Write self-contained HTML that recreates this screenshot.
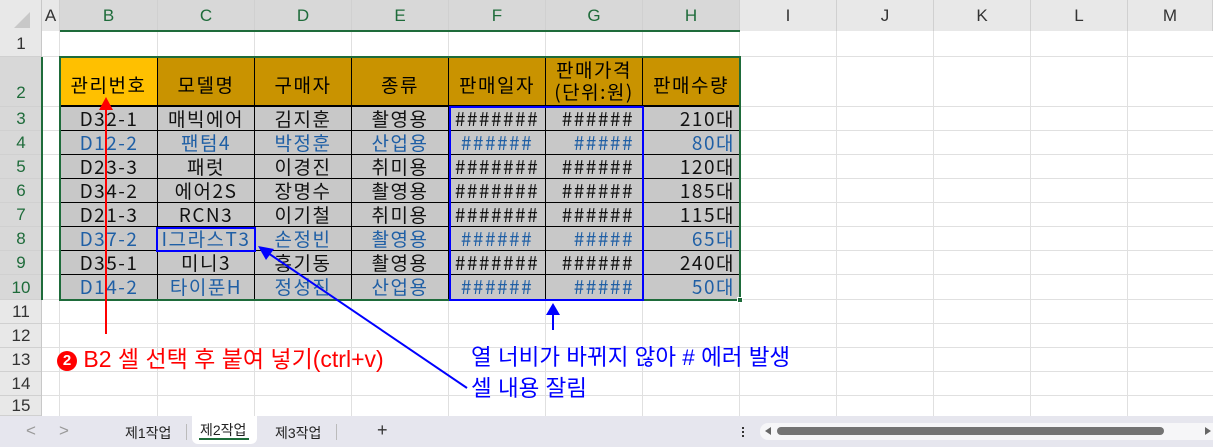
<!DOCTYPE html>
<html><head><meta charset="utf-8"><style>
*{margin:0;padding:0;box-sizing:border-box}
body{width:1213px;height:447px;overflow:hidden;background:#fff;position:relative;font-family:"Liberation Sans","Noto Sans CJK KR",sans-serif}
.a{position:absolute}
.ch{position:absolute;top:0;height:31px;background:#e8e8e8;border-right:1px solid #d0d0d0;color:#333;font-size:17px;text-align:center;line-height:31px}
.rh{position:absolute;left:0;width:42px;background:#e8e8e8;border-bottom:1px solid #d0d0d0;color:#333;font-size:17px;text-align:center}
.c{position:absolute;border-right:1px solid #000;border-bottom:1px solid #000;font-family:"Noto Sans CJK KR",sans-serif;font-weight:400;font-size:19px;text-align:center;overflow:hidden;white-space:nowrap;letter-spacing:1.5px}
.gl{position:absolute;background:#e0e0e0}
</style></head><body>
<div id="g"></div>
<script>
var cols=[42,60,158,255,352,449,546,643,740,837,934,1031,1128,1213];
var names=["A","B","C","D","E","F","G","H","I","J","K","L","M"];
var rows=[31,57,107,131,155,179,203,227,251,275,300,324,348,372,396,416];
var h="";
for(var i=1;i<cols.length-1;i++)h+='<div class="gl" style="left:'+(cols[i]-1)+'px;top:31px;width:1px;height:385px"></div>';
for(var j=1;j<rows.length-1;j++)h+='<div class="gl" style="left:42px;top:'+(rows[j]-1)+'px;width:1171px;height:1px"></div>';
for(var i=0;i<names.length;i++){var sel=i>=1&&i<=7;h+='<div class="ch" style="left:'+cols[i]+'px;width:'+(cols[i+1]-cols[i])+'px;'+(sel?'color:#1e6b3a;background:#d8d8d8':'')+'">'+names[i]+'</div>';}
h+='<div class="a" style="left:0;top:0;width:42px;height:31px;background:#e8e8e8;border-right:1px solid #d0d0d0"></div>';
h+='<div class="a" style="left:14px;top:12px;width:0;height:0;border-left:16px solid transparent;border-bottom:16px solid #c8c8c8"></div>';
for(var j=0;j<rows.length-1;j++){var sel=j>=1&&j<=9;var hh=rows[j+1]-rows[j];h+='<div class="rh" style="top:'+rows[j]+'px;height:'+hh+'px;line-height:'+(j==1?hh*1.45:hh)+'px;'+(sel?'color:#1e6b3a;background:#d8d8d8':'')+'">'+(j+1)+'</div>';}
h+='<div class="a" style="left:41px;top:0;width:1px;height:416px;background:#c8c8c8"></div>';
h+='<div class="a" style="left:60px;top:30px;width:680px;height:2px;background:#1e6b3a"></div>';
h+='<div class="a" style="left:41px;top:57px;width:2px;height:243px;background:#1e6b3a"></div>';
var hd=["관리번호","모델명","구매자","종류","판매일자","판매가격<br>(단위:원)","판매수량"];
var data=[["D32-1","매빅에어","김지훈","촬영용","#######","######","210대",0],
["D12-2","팬텀4","박정훈","산업용","######","#####","80대",1],
["D23-3","패럿","이경진","취미용","#######","######","120대",0],
["D34-2","에어2S","장명수","촬영용","#######","######","185대",0],
["D21-3","RCN3","이기철","취미용","#######","######","115대",0],
["D37-2","I그라스T3","손정빈","촬영용","######","#####","65대",1],
["D35-1","미니3","홍기동","촬영용","#######","######","240대",0],
["D14-2","타이푼H","정성진","산업용","######","#####","50대",1]];
for(var i=0;i<7;i++){h+='<div class="c" style="left:'+cols[i+1]+'px;top:57px;width:'+(cols[i+2]-cols[i+1])+'px;height:50px;border-bottom:2px solid #000;background:'+(i==0?'#ffc000':'#c99300')+';display:flex;align-items:center;justify-content:center;line-height:22px;'+(i==5?'padding-top:0':'padding-top:8px')+'">'+hd[i]+'</div>';}
for(var r=0;r<8;r++){var d=data[r];for(var i=0;i<7;i++){var al=i==6?'right;padding-right:4px':(i==5?'right;padding-right:8px':'center');if(i==4)al='center';h+='<div class="c" style="left:'+cols[i+1]+'px;top:'+rows[r+2]+'px;width:'+(cols[i+2]-cols[i+1])+'px;height:'+(rows[r+3]-rows[r+2])+'px;line-height:'+(rows[r+3]-rows[r+2]-1)+'px;background:#c8c8c8;color:'+(d[7]?'#1f5fa5':'#111')+';text-align:'+al+(i==0?';border-left:1px solid #000':'')+'">'+d[i]+'</div>';}}
h+='<div class="a" style="left:59px;top:56px;width:682px;height:245px;border:2px solid #1e6b3a"></div>';
h+='<div class="a" style="left:737px;top:297px;width:6px;height:6px;background:#1e6b3a;border:1px solid #fff"></div>';
document.getElementById("g").innerHTML=h;
</script>
<div class="a" style="left:449px;top:106px;width:195px;height:195px;border:2px solid #0000ff"></div>
<div class="a" style="left:156px;top:227px;width:100px;height:25px;border:2px solid #0000ff"></div>
<svg class="a" style="left:0;top:0" width="1213" height="447">
<line x1="106" y1="334" x2="106" y2="110" stroke="#ff0000" stroke-width="2"/>
<polygon points="106,97 99,110 113,110" fill="#ff0000"/>
<line x1="553" y1="330" x2="553" y2="313" stroke="#0000ff" stroke-width="2"/>
<polygon points="553,303 546,315 560,315" fill="#0000ff"/>
<line x1="268" y1="253" x2="467" y2="388" stroke="#0000ff" stroke-width="2"/>
<polygon points="258,246 274,249 266,260" fill="#0000ff"/>
</svg>
<div class="a" style="left:57px;top:340px;color:#ff0000;font-size:23px;white-space:nowrap"><span style="display:inline-block;width:20px;height:20px;border-radius:50%;background:#ff0000;color:#fff;font-size:15px;font-weight:bold;text-align:center;line-height:20px;vertical-align:2px">2</span> B2 셀 선택 후 붙여 넣기(ctrl+v)</div>
<div class="a" style="left:471px;top:340px;color:#0000ff;font-size:22.5px;white-space:nowrap">열 너비가 바뀌지 않아 # 에러 발생</div>
<div class="a" style="left:471px;top:371px;color:#0000ff;font-size:22.5px;white-space:nowrap">셀 내용 잘림</div>
<div class="a" style="left:0;top:416px;width:1213px;height:31px;background:#e6e6ee"></div>
<div class="a" style="left:26px;top:421px;color:#999;font-size:17px">&lt;</div>
<div class="a" style="left:59px;top:421px;color:#999;font-size:17px">&gt;</div>
<div class="a" style="left:125px;top:423px;font-size:14px;color:#222">제1작업</div>
<div class="a" style="left:186px;top:424px;width:1px;height:16px;background:#bbb"></div>
<div class="a" style="left:192px;top:416px;width:65px;height:28px;background:#fff;border-radius:0 0 6px 6px"></div>
<div class="a" style="left:200px;top:420px;font-size:14px;color:#222">제2작업</div>
<div class="a" style="left:199px;top:438px;width:50px;height:2px;background:#1e6b3a"></div>
<div class="a" style="left:275px;top:423px;font-size:14px;color:#222">제3작업</div>
<div class="a" style="left:336px;top:424px;width:1px;height:16px;background:#bbb"></div>
<div class="a" style="left:377px;top:420px;font-size:18px;color:#333">+</div>
<div class="a" style="left:742px;top:427px;width:2px;height:2px;background:#333;box-shadow:0 4px 0 #333,0 8px 0 #333"></div>
<div class="a" style="left:760px;top:423px;width:453px;height:17px;background:#f6f6f8;border-radius:8px 0 0 8px"></div>
<div class="a" style="left:765px;top:427px;width:0;height:0;border-top:4px solid transparent;border-bottom:4px solid transparent;border-right:6px solid #666"></div>
<div class="a" style="left:777px;top:427px;width:387px;height:8px;background:#737373;border-radius:4px"></div>
<div class="a" style="left:1205px;top:427px;width:0;height:0;border-top:4px solid transparent;border-bottom:4px solid transparent;border-left:6px solid #666"></div>
</body></html>
